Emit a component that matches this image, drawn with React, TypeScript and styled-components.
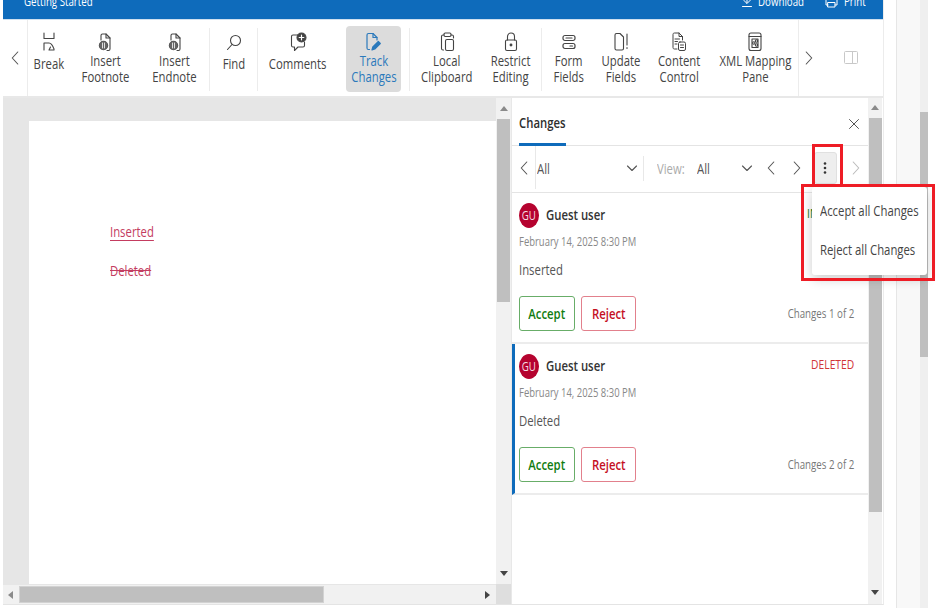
import React from "react";
import styled, { createGlobalStyle, css } from "styled-components";

const SQUEEZE = 0.81;
const squeeze = (origin: string) => css`
  transform: scaleX(${SQUEEZE});
  transform-origin: ${origin};
  white-space: nowrap;
`;

const Global = createGlobalStyle`
  html, body { margin: 0; padding: 0; background: #fff; }
  * { box-sizing: border-box; }
  body { font-family: "Open Sans", "Noto Sans", "Liberation Sans", sans-serif; }
`;

const Page = styled.div`
  position: relative;
  display: flex;
  width: 936px;
  height: 608px;
  padding-left: 3px;
  overflow: hidden;
  background: #fff;
`;
const Main = styled.div`
  display: flex;
  flex-direction: column;
  width: 881px;
  height: 605px;
  border-right: 1px solid #ececec;
  border-bottom: 1px solid #e4e4e4;
`;
const TopBar = styled.div`
  display: flex;
  align-items: flex-end;
  flex: none;
  height: 19px;
  padding: 0 18px 11px 21px;
  overflow: hidden;
  background: #0e6bbb;
  color: #fff;
  font-size: 12px;
`;
const TopAction = styled.span<{ $left?: number }>`
  display: flex;
  align-items: center;
  gap: 6px;
  margin-left: ${(p) => p.$left ?? 0}px;
  line-height: 13px;
  height: 13px;
  svg { flex: none; }
`;
const TopText = styled.span<{ $width: number }>`
  display: block;
  flex: none;
  width: ${(p) => p.$width}px;
  ${squeeze("left")}
`;
const TopTitle = styled.span`
  line-height: 13px;
  margin-right: auto;
  ${squeeze("left")}
`;
const Toolbar = styled.div`
  display: flex;
  flex: none;
  height: 79px;
  background: #fff;
  border-top: 1px solid #cfe0ef;
  border-bottom: 2px solid #e8e8e8;
`;
const ToolNav = styled.button<{ $width: number; $border?: string }>`
  display: flex;
  align-items: center;
  justify-content: center;
  flex: none;
  width: ${(p) => p.$width}px;
  padding: 0;
  border: none;
  background: none;
  color: #555;
  ${(p) => (p.$border ? `border-${p.$border}: 1px solid #ececec;` : "")}
`;
const ToolItem = styled.div<{ $width: number; $active?: boolean; $left?: number }>`
  display: flex;
  flex-direction: column;
  align-items: center;
  flex: none;
  width: ${(p) => p.$width}px;
  height: ${(p) => (p.$active ? "66px" : "100%")};
  margin: ${(p) => (p.$active ? "6px" : "0")} 0 0 ${(p) => p.$left ?? 0}px;
  padding-top: ${(p) => (p.$active ? "5px" : "11px")};
  border-radius: 4px;
  background: ${(p) => (p.$active ? "#dcdcdc" : "transparent")};
  color: ${(p) => (p.$active ? "#2b79bb" : "#444")};
`;
const ToolIcon = styled.span`
  display: flex;
  align-items: center;
  justify-content: center;
  height: 22px;
`;
const ToolLabel = styled.span<{ $single: boolean }>`
  display: block;
  height: 32px;
  padding-top: ${(p) => (p.$single ? "3px" : "0")};
  font-size: 14px;
  line-height: 16px;
  text-align: center;
  ${squeeze("center")}
  white-space: pre;
`;
const ToolSep = styled.span<{ $left?: number }>`
  flex: none;
  align-self: flex-start;
  width: 1px;
  height: 63px;
  margin: 8px 0 0 ${(p) => p.$left ?? 0}px;
  background: #ececec;
`;
const PanelToggle = styled.span`
  display: flex;
  flex: 1;
  align-items: center;
  justify-content: center;
`;
const Workspace = styled.div`
  display: flex;
  flex: 1;
  min-height: 0;
`;
const EditorColumn = styled.div`
  display: flex;
  flex-direction: column;
  flex: none;
  width: 509px;
  border-right: 1px solid #e8e8e8;
`;
const EditorRow = styled.div`
  display: flex;
  flex: 1;
  min-height: 0;
`;
const Canvas = styled.div`
  flex: none;
  display: flex;
  width: 493px;
  padding: 23px 0 0 26px;
  background: #e6e6e6;
`;
const Sheet = styled.div`
  flex: 1;
  padding: 103px 0 0 81px;
  background: #fff;
  font-size: 14px;
  color: #c43c60;
`;
const SheetLine = styled.p<{ $kind: "ins" | "del" }>`
  margin: 0 0 23px;
  line-height: 16px;
  text-decoration: ${(p) => (p.$kind === "ins" ? "underline" : "line-through")};
  text-underline-offset: 3px;
  ${squeeze("left")}
`;
const VTrack = styled.div<{ $width: number }>`
  display: flex;
  flex-direction: column;
  flex: none;
  align-items: center;
  width: ${(p) => p.$width}px;
  background: #f1f1f1;
`;
const VArrow = styled.span<{ $height: number }>`
  display: flex;
  align-items: center;
  justify-content: center;
  flex: none;
  height: ${(p) => p.$height}px;
`;
const VThumb = styled.span<{ $height: number; $width: number }>`
  flex: none;
  width: ${(p) => p.$width}px;
  height: ${(p) => p.$height}px;
  background: #bfbfbf;
`;
const Spacer = styled.span`
  flex: 1;
`;
const HRow = styled.div`
  display: flex;
  flex: none;
  height: 20px;
`;
const HTrack = styled.div`
  display: flex;
  align-items: center;
  flex: none;
  width: 493px;
  background: #f1f1f1;
  border-top: 1px solid #e6e6e6;
  padding-right: 4px;
`;
const HArrow = styled.span`
  display: flex;
  align-items: center;
  justify-content: center;
  width: 16px;
  flex: none;
`;
const HThumb = styled.span`
  width: 305px;
  height: 17px;
  flex: none;
  background: #bfbfbf;
  border: 1px solid #d2d2d2;
`;
const Corner = styled.div`
  flex: 1;
  background: #dedede;
`;
const ChangesPanel = styled.section`
  display: flex;
  flex-direction: column;
  flex: none;
  width: 356px;
  background: #fff;
`;
const PanelHead = styled.header`
  display: flex;
  flex: none;
  justify-content: space-between;
  height: 48px;
  padding: 0 8px 0 7px;
  border-bottom: 1px solid #e4e4e4;
`;
const PanelTab = styled.h2`
  width: 47px;
  height: 48px;
  margin: 0;
  padding-top: 16px;
  border-bottom: 3px solid #0e6bbb;
  color: #2d2d2d;
  font-size: 14px;
  font-weight: 600;
  line-height: 17px;
`;
const PanelTabText = styled.span`
  display: block;
  ${squeeze("left")}
`;
const PanelClose = styled.span`
  margin-top: 15px;
  color: #555;
`;
const FilterRow = styled.div`
  display: flex;
  flex: none;
  align-items: center;
  height: 47px;
  padding-bottom: 2px;
  border-bottom: 1px solid #e4e4e4;
  color: #444;
  font-size: 14px;
`;
const FilterBack = styled.span`
  display: flex;
  align-items: center;
  justify-content: center;
  align-self: flex-start;
  flex: none;
  width: 24px;
  height: 43px;
  border-right: 1px solid #e8e8e8;
  color: #555;
`;
const SelectBox = styled.div<{ $width: number }>`
  display: flex;
  flex: none;
  align-items: center;
  justify-content: space-between;
  width: ${(p) => p.$width}px;
  padding: 0 4px 0 1px;
  color: #555;
`;
const SelectText = styled.span`
  display: block;
  ${squeeze("left")}
`;
const FilterDivider = styled.span`
  flex: none;
  width: 1px;
  height: 25px;
  background: #e8e8e8;
`;
const ViewLabel = styled.span`
  flex: none;
  width: 39px;
  margin-left: 13px;
  color: #aaa;
  ${squeeze("left")}
`;
const NavButton = styled.span<{ $width: number; $tone?: string; $left?: number }>`
  display: flex;
  flex: none;
  align-items: center;
  justify-content: center;
  width: ${(p) => p.$width}px;
  margin-left: ${(p) => p.$left ?? 0}px;
  color: ${(p) => p.$tone ?? "#555"};
`;
const KebabButton = styled.span`
  display: flex;
  flex: none;
  align-items: center;
  justify-content: center;
  width: 23px;
  height: 32px;
  margin: 0 0 0 4px;
  padding-right: 2px;
  border: 1px solid #e0e0e0;
  border-radius: 3px;
  background: #eeeeee;
  color: #333;
`;
const Card = styled.article<{ $current?: boolean }>`
  flex: none;
  height: 151px;
  padding: 9px 14px 0 ${(p) => (p.$current ? "4px" : "7px")};
  border-left: ${(p) => (p.$current ? "3px solid #0e6bbb" : "none")};
  border-bottom: 2px solid #ececec;
`;
const CardTop = styled.div`
  display: flex;
  align-items: center;
  height: 26px;
`;
const Avatar = styled.span`
  display: flex;
  align-items: center;
  justify-content: center;
  flex: none;
  width: 20px;
  height: 25px;
  margin-right: 7px;
  border-radius: 50%;
  background: #b5032f;
  color: #f4dfe4;
  font-size: 12px;
`;
const AvatarText = styled.span`
  ${squeeze("center")}
`;
const UserName = styled.span`
  margin-top: -2px;
  color: #333;
  font-size: 14px;
  font-weight: 600;
  ${squeeze("left")}
`;
const Status = styled.span<{ $tone: string }>`
  margin: -5px 0 0 auto;
  color: ${(p) => p.$tone};
  font-size: 12.7px;
  ${squeeze("right")}
`;
const CardDate = styled.div`
  margin-top: 6px;
  color: #888;
  font-size: 11.7px;
  line-height: 15px;
  ${squeeze("left")}
`;
const CardText = styled.div`
  margin-top: 12px;
  color: #555;
  font-size: 14px;
  line-height: 17px;
  ${squeeze("left")}
`;
const CardFoot = styled.div`
  display: flex;
  align-items: center;
  gap: 6px;
  margin-top: 18px;
`;
const ActionButton = styled.button<{ $tone: string; $line: string; $width: number }>`
  display: flex;
  align-items: center;
  justify-content: center;
  flex: none;
  width: ${(p) => p.$width}px;
  height: 35px;
  padding: 0;
  border: 1px solid ${(p) => p.$line};
  border-radius: 3px;
  background: #fff;
  color: ${(p) => p.$tone};
  font-family: inherit;
  font-size: 14px;
  font-weight: 600;
`;
const ActionText = styled.span`
  ${squeeze("center")}
`;
const ChangeCount = styled.span`
  margin-left: auto;
  color: #777;
  font-size: 12px;
  ${squeeze("right")}
`;
const Gutter = styled.aside`
  display: flex;
  justify-content: flex-end;
  flex: none;
  width: 32px;
  height: 608px;
  margin-left: 12px;
  border-left: 1px solid #e6e6e6;
  background: #f8f8f8;
`;
const GutterTrack = styled.div`
  display: flex;
  flex-direction: column;
  width: 8px;
  background: #efefef;
  overflow: hidden;
`;
const GutterThumb = styled.span`
  flex: none;
  height: 245px;
  margin-top: 112px;
  background: #bfbfbf;
`;
const Menu = styled.div`
  position: absolute;
  left: 812px;
  top: 187px;
  display: flex;
  flex-direction: column;
  width: 115px;
  height: 88px;
  padding-top: 4px;
  border-radius: 3px;
  background: #fff;
  box-shadow: 0 4px 12px rgba(0, 0, 0, 0.2);
`;
const MenuItem = styled.div`
  height: 39px;
  padding: 11px 0 0 8px;
  color: #444;
  font-size: 14px;
  line-height: 17px;
  ${squeeze("8px 0")}
`;
const Highlight = styled.div<{ $x: number; $y: number; $w: number; $h: number }>`
  position: absolute;
  left: ${(p) => p.$x}px;
  top: ${(p) => p.$y}px;
  width: ${(p) => p.$w}px;
  height: ${(p) => p.$h}px;
  border: 3px solid #ee1c25;
  pointer-events: none;
`;

const S = { fill: "none", stroke: "currentColor", strokeWidth: 1.1, strokeLinecap: "round", strokeLinejoin: "round" } as const;

const Chevron = ({ dir, size = 14 }: { dir: "left" | "right" | "down"; size?: number }) => {
  const d = dir === "left" ? "M9.750 1 4.250 7 9.750 13" : dir === "right" ? "M4.250 1 9.750 7 4.250 13" : "M2.500 5 7 9.500 11.500 5";
  return (
    <svg width={size} height={size} viewBox="0 0 14 14" {...S}>
      <path d={d} />
    </svg>
  );
};
const Tri = ({ dir }: { dir: "up" | "down" | "left" | "right" }) => {
  const pts = { up: "4,1 8,6 0,6", down: "0,1 8,1 4,6", left: "6,0 6,8 1,4", right: "1,0 1,8 6,4" }[dir];
  return (
    <svg width="8" height="8" viewBox="0 0 8 8">
      <polygon points={pts} fill={dir === "left" || dir === "up" ? "#8a8a8a" : "#444"} />
    </svg>
  );
};
const BreakIcon = () => (
  <svg width="14" height="20" viewBox="0 0 14 20" {...S}>
    <path d="M2 1v5.500h10V1" />
    <path d="M2 18v-7h5c2.500 0 3.500 2 5 6v1H7l1.500-3" />
  </svg>
);
const NoteIcon = () => (
  <svg width="14" height="20" viewBox="0 0 14 20" {...S}>
    <path d="M3 8V3.500C3 2.500 3.500 2 4.500 2H8l4 4v11c0 1-.5 1.500-1.500 1.500H9" />
    <path d="M8 2v4h4" />
    <circle cx="5.500" cy="13.500" r="4.200" fill="#666" stroke="#555" />
    <path d="M4.500 11v5M6.500 11v5" stroke="#fff" strokeWidth="0.8" />
  </svg>
);
const FindIcon = () => (
  <svg width="16" height="18" viewBox="0 0 16 18" {...S}>
    <circle cx="9.500" cy="7.500" r="5" />
    <path d="M6 11.500 1.500 16.500" />
  </svg>
);
const CommentIcon = () => (
  <svg width="17" height="20" viewBox="0 0 17 20" {...S}>
    <path d="M8 3H3C2 3 1.500 3.500 1.500 4.500v9c0 1 .5 1.500 1.500 1.500h1.500v3.500L8 15h5c1 0 1.500-.5 1.500-1.500V10" />
    <circle cx="11.500" cy="5.500" r="4.500" fill="#444" stroke="#444" />
    <path d="M11.500 3.200v4.600M9.200 5.500h4.600" stroke="#fff" strokeWidth="1.200" />
  </svg>
);
const TrackIcon = () => (
  <svg width="16" height="20" viewBox="0 0 16 20" {...S} stroke="#2b79bb" strokeWidth="1.200">
    <path d="M3.500 17.500H2.500C1.500 17.500 1 17 1 16V3c0-1 .5-1.500 1.500-1.500H7l4 4V8" />
    <path d="M7 1.500v4h4" />
    <path d="M6 18l.8-3 5.500-5.500 2 2-5.500 5.500z" fill="#2b79bb" />
  </svg>
);
const ClipIcon = () => (
  <svg width="15" height="20" viewBox="0 0 15 20" {...S}>
    <path d="M3.500 18H3c-1 0-1.500-.5-1.500-1.500V4.500C1.500 3.500 2 3 3 3h1" />
    <path d="M11 3h1c1 0 1.500.5 1.500 1.500V6" />
    <rect x="4" y="1" width="7" height="3.500" rx="1.200" />
    <rect x="5.500" y="7.500" width="8" height="11" rx="1.500" />
  </svg>
);
const LockIcon = () => (
  <svg width="14" height="20" viewBox="0 0 14 20" {...S}>
    <path d="M3.500 8V4.500a3.500 3.500 0 0 1 7 0V8" />
    <rect x="1.500" y="8" width="11" height="10.500" rx="1.500" />
    <circle cx="7" cy="13" r="0.900" fill="currentColor" />
  </svg>
);
const FormIcon = () => (
  <svg width="14" height="16" viewBox="0 0 14 16" {...S} strokeWidth="1.200">
    <rect x="1" y="1.500" width="12" height="5" rx="2" />
    <rect x="1" y="9.500" width="12" height="5" rx="2" />
    <path d="M4 4h6M8 12h2.500" />
  </svg>
);
const UpdateIcon = () => (
  <svg width="15" height="20" viewBox="0 0 15 20" {...S}>
    <path d="M6 1.500H2.500C1.500 1.500 1 2 1 3v13.500c0 1 .5 1.500 1.500 1.500H8c1 0 1.500-.5 1.500-1.500V5z" />
    <path d="M13 2v11M13 15.500v1" />
  </svg>
);
const ContentIcon = () => (
  <svg width="14" height="20" viewBox="0 0 14 20" {...S} strokeWidth="1">
    <path d="M5 17H2.500C1.500 17 1 16.500 1 15.500V2.500C1 1.500 1.500 1 2.500 1H7l3.500 3.500V8" />
    <path d="M7 1v3.500h3.500M3 7h4.500M3 9.500h2.500M3 12h2" />
    <rect x="6.500" y="10" width="7" height="8.500" rx="1.500" />
    <path d="M8.500 13h3M8.500 15.500h3" />
  </svg>
);
const XmlIcon = () => (
  <svg width="14" height="20" viewBox="0 0 14 20" {...S}>
    <rect x="1" y="1" width="12" height="17.500" rx="2" />
    <path d="M1 4.500h12" />
    <path d="M4 7h6v8.500H4z" />
    <circle cx="8.500" cy="9" r="1.200" />
    <circle cx="5.800" cy="11" r="1.200" />
    <circle cx="8.500" cy="13" r="1.200" />
  </svg>
);
const DownloadIcon = () => (
  <svg width="10" height="13" viewBox="0 0 10 13" {...S} strokeWidth="1">
    <path d="M5 0v8M1.500 5 5 8.500 8.500 5M0.500 11.500h9" />
  </svg>
);
const PrintIcon = () => (
  <svg width="13" height="13" viewBox="0 0 13 13" {...S} strokeWidth="1">
    <path d="M3 4V1h7v3M3 10H1V4.500h11V10h-2" />
    <rect x="3" y="7.500" width="7" height="4.500" />
  </svg>
);
const PaneIcon = () => (
  <svg width="14" height="14" viewBox="0 0 14 14" fill="none" stroke="#c8c8c8" strokeWidth="1">
    <rect x="0.500" y="0.500" width="13" height="12" rx="1" />
    <path d="M8.500 0.500v12" />
  </svg>
);
const CloseIcon = () => (
  <svg width="12" height="12" viewBox="0 0 12 12" {...S} strokeWidth="1">
    <path d="M1.500 1.500 10.500 10.500M10.500 1.500 1.500 10.500" />
  </svg>
);
const KebabIcon = () => (
  <svg width="4" height="14" viewBox="0 0 4 14" fill="currentColor">
    <circle cx="2" cy="2.500" r="1.300" />
    <circle cx="2" cy="7" r="1.300" />
    <circle cx="2" cy="11.500" r="1.300" />
  </svg>
);

type Tool = { label: string; width: number; icon: React.ReactNode; active?: boolean; left?: number };
const Item = ({ label, width, icon, active, left }: Tool) => (
  <ToolItem $width={width} $active={active} $left={left}>
    <ToolIcon>{icon}</ToolIcon>
    <ToolLabel $single={!label.includes("\n")}>{label}</ToolLabel>
  </ToolItem>
);

const ChangeCard = ({ current, status, tone, text, count }: { current?: boolean; status: string; tone: string; text: string; count: string }) => (
  <Card $current={current}>
    <CardTop>
      <Avatar><AvatarText>GU</AvatarText></Avatar>
      <UserName>Guest user</UserName>
      <Status $tone={tone}>{status}</Status>
    </CardTop>
    <CardDate>February 14, 2025 8:30 PM</CardDate>
    <CardText>{text}</CardText>
    <CardFoot>
      <ActionButton $tone="#107c10" $line="#68ad68" $width={56}><ActionText>Accept</ActionText></ActionButton>
      <ActionButton $tone="#c50f1f" $line="#e2808c" $width={55}><ActionText>Reject</ActionText></ActionButton>
      <ChangeCount>{count}</ChangeCount>
    </CardFoot>
  </Card>
);

export default function App() {
  return (
    <Page>
      <Global />
      <Main>
        <TopBar>
          <TopTitle>Getting Started</TopTitle>
          <TopAction><DownloadIcon /><TopText $width={46}>Download</TopText></TopAction>
          <TopAction $left={21}><PrintIcon /><TopText $width={21}>Print</TopText></TopAction>
        </TopBar>
        <Toolbar>
          <ToolNav $width={25} $border="right"><Chevron dir="left" /></ToolNav>
          <Item label="Break" width={42} icon={<BreakIcon />} />
          <Item label={"Insert\nFootnote"} width={70} icon={<NoteIcon />} />
          <Item label={"Insert\nEndnote"} width={69} icon={<NoteIcon />} />
          <ToolSep />
          <Item label="Find" width={47} icon={<FindIcon />} />
          <ToolSep />
          <Item label="Comments" width={80} icon={<CommentIcon />} />
          <Item label={"Track\nChanges"} width={55} icon={<TrackIcon />} active left={8} />
          <ToolSep $left={8} />
          <Item label={"Local\nClipboard"} width={74} icon={<ClipIcon />} />
          <Item label={"Restrict\nEditing"} width={53} icon={<LockIcon />} />
          <ToolSep $left={4} />
          <Item label={"Form\nFields"} width={54} icon={<FormIcon />} />
          <Item label={"Update\nFields"} width={50} icon={<UpdateIcon />} />
          <Item label={"Content\nControl"} width={66} icon={<ContentIcon />} />
          <Item label={"XML Mapping\nPane"} width={86} icon={<XmlIcon />} />
          <ToolNav $width={21} $border="left"><Chevron dir="right" /></ToolNav>
          <PanelToggle><PaneIcon /></PanelToggle>
        </Toolbar>
        <Workspace>
          <EditorColumn>
            <EditorRow>
              <Canvas>
                <Sheet>
                  <SheetLine $kind="ins">Inserted</SheetLine>
                  <SheetLine $kind="del">Deleted</SheetLine>
                </Sheet>
              </Canvas>
              <VTrack $width={15}>
                <VArrow $height={21}><Tri dir="up" /></VArrow>
                <VThumb $height={183} $width={13} />
                <Spacer />
                <VArrow $height={20}><Tri dir="down" /></VArrow>
              </VTrack>
            </EditorRow>
            <HRow>
              <HTrack>
                <HArrow><Tri dir="left" /></HArrow>
                <HThumb />
                <Spacer />
                <Tri dir="right" />
              </HTrack>
              <Corner />
            </HRow>
          </EditorColumn>
          <ChangesPanel>
            <PanelHead>
              <PanelTab><PanelTabText>Changes</PanelTabText></PanelTab>
              <PanelClose><CloseIcon /></PanelClose>
            </PanelHead>
            <FilterRow>
              <FilterBack><Chevron dir="left" /></FilterBack>
              <SelectBox $width={107}><SelectText>All</SelectText><Chevron dir="down" /></SelectBox>
              <FilterDivider />
              <ViewLabel>View:</ViewLabel>
              <SelectBox $width={62}><SelectText>All</SelectText><Chevron dir="down" /></SelectBox>
              <NavButton $width={26}><Chevron dir="left" /></NavButton>
              <NavButton $width={26}><Chevron dir="right" /></NavButton>
              <KebabButton><KebabIcon /></KebabButton>
              <NavButton $width={22} $left={8} $tone="#bbb"><Chevron dir="right" /></NavButton>
            </FilterRow>
            <ChangeCard status="INSERTED" tone="#107c10" text="Inserted" count="Changes 1 of 2" />
            <ChangeCard current status="DELETED" tone="#d13438" text="Deleted" count="Changes 2 of 2" />
          </ChangesPanel>
          <VTrack $width={14}>
            <VArrow $height={20}><Tri dir="up" /></VArrow>
            <VThumb $height={394} $width={13} />
            <Spacer />
            <VArrow $height={22}><Tri dir="down" /></VArrow>
          </VTrack>
        </Workspace>
      </Main>
      <Gutter>
        <GutterTrack>
          <GutterThumb />
        </GutterTrack>
      </Gutter>
      <Menu>
        <MenuItem>Accept all Changes</MenuItem>
        <MenuItem>Reject all Changes</MenuItem>
      </Menu>
      <Highlight $x={812} $y={144} $w={31} $h={43} />
      <Highlight $x={801} $y={184} $w={134} $h={97} />
    </Page>
  );
}
